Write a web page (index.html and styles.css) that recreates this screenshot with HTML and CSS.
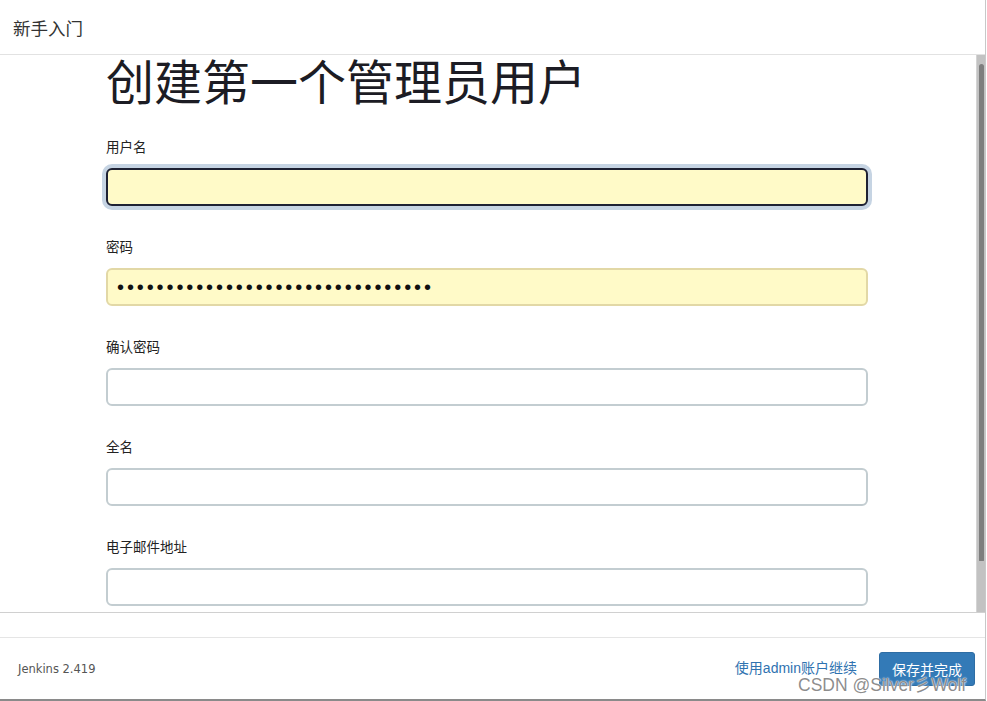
FILE: index.html
```html
<!DOCTYPE html>
<html lang="zh-CN">
<head>
<meta charset="utf-8">
<title>新手入门</title>
<link rel="stylesheet" href="styles.css">
</head>
<body>
<div class="dialog">
  <div class="header">新手入门</div>
  <div class="body">
    <div class="content">
      <h1 class="title">创建第一个管理员用户</h1>
      <div class="field">
        <label class="label">用户名</label>
        <input class="input input-focus" type="text">
      </div>
      <div class="field">
        <label class="label">密码</label>
        <input class="input input-auto" type="password" value="abcdefghijabcdefghijabcdefghijab">
      </div>
      <div class="field">
        <label class="label">确认密码</label>
        <input class="input" type="password">
      </div>
      <div class="field">
        <label class="label">全名</label>
        <input class="input" type="text">
      </div>
      <div class="field">
        <label class="label">电子邮件地址</label>
        <input class="input" type="text">
      </div>
    </div>
    <div class="scrollbar"><div class="thumb"></div></div>
  </div>
  <div class="band"></div>
  <div class="footer">
    <span class="version">Jenkins 2.419</span>
    <div class="actions">
      <a class="link" href="#">使用admin账户继续</a>
      <button class="btn">保存并完成</button>
    </div>
  </div>
  <div class="watermark">CSDN @Silver彡Wolf</div>
</div>
</body>
</html>
```
FILE: styles.css
```css
html, body {
  margin: 0;
  padding: 0;
  background: #ffffff;
}
body {
  font-family: "Noto Sans CJK SC", "Noto Sans", sans-serif;
  color: #222;
}
.dialog {
  position: relative;
  width: 985px;
  height: 699px;
  border-right: 1px solid #c8c8c8;
  border-bottom: 2px solid #8a8a8a;
  display: flex;
  flex-direction: column;
  overflow: hidden;
}
.header {
  height: 54px;
  flex: none;
  border-bottom: 1px solid #e2e2e2;
  display: flex;
  align-items: center;
  padding-left: 13px;
  font-size: 17.5px;
  color: #333;
}
.body {
  height: 557px;
  flex: none;
  display: flex;
  overflow: hidden;
}
.content {
  flex: 1;
  padding: 0 108px 0 106px;
  overflow: hidden;
}
.title {
  margin: 0 0 34px 0;
  font-size: 48px;
  line-height: 48px;
  font-weight: 400;
  color: #1c1c24;
  white-space: nowrap;
}
.field {
  display: flex;
  flex-direction: column;
  margin-bottom: 31px;
}
.label {
  font-size: 13.5px;
  line-height: 20px;
  color: #222;
  margin-top: -1px;
  margin-bottom: 12px;
}
.input {
  box-sizing: border-box;
  height: 38px;
  width: 762px;
  border: 2px solid #c3cdd1;
  border-radius: 6px;
  background: #fff;
  padding: 0 9px;
  font-family: "Liberation Sans", sans-serif;
  outline: none;
}
.input-focus {
  background: #fffac8;
  border-color: #1e2133;
  box-shadow: 0 0 0 4px #c6d4e3;
}
.input-auto {
  background: #fffac8;
  border-color: #e2d8a6;
  font-size: 20px;
  letter-spacing: 2.9px;
  color: #111;
}
.scrollbar {
  width: 9px;
  flex: none;
  background: #c2c2c2;
  border-left: 1px solid #d4d4d4;
  padding-top: 9px;
  box-sizing: border-box;
}
.thumb {
  width: 5px;
  height: 497px;
  margin-left: 2px;
  background: #7e7e7e;
  border-radius: 3px 3px 1px 1px;
}
.band {
  height: 24px;
  flex: none;
  border-top: 1px solid #d0d0d0;
}
.footer {
  flex: 1;
  border-top: 1px solid #e5e5e5;
  display: flex;
  align-items: center;
  justify-content: space-between;
  padding: 0 10px 0 18px;
}
.version {
  font-family: "DejaVu Sans", sans-serif;
  font-size: 11.5px;
  color: #555;
}
.actions {
  display: flex;
  align-items: center;
  gap: 22px;
}
.link {
  font-family: "Liberation Sans", "Noto Sans CJK SC", sans-serif;
  font-size: 14px;
  color: #2f72b0;
  text-decoration: none;
  margin-top: -3px;
}
.btn {
  height: 34px;
  width: 96px;
  background: #337ab7;
  border: 1px solid #2e6da4;
  border-radius: 3px;
  color: #fff;
  font-family: "Noto Sans CJK SC", sans-serif;
  font-size: 14px;
  padding: 0;
}
.watermark {
  position: absolute;
  left: 798px;
  top: 671px;
  font-family: "Liberation Sans", "Noto Sans CJK SC", sans-serif;
  font-size: 17.5px;
  color: rgba(120, 120, 120, 0.85);
  text-shadow: 0 0 2px #fff, 0 0 1px #fff;
  white-space: nowrap;
}
```
